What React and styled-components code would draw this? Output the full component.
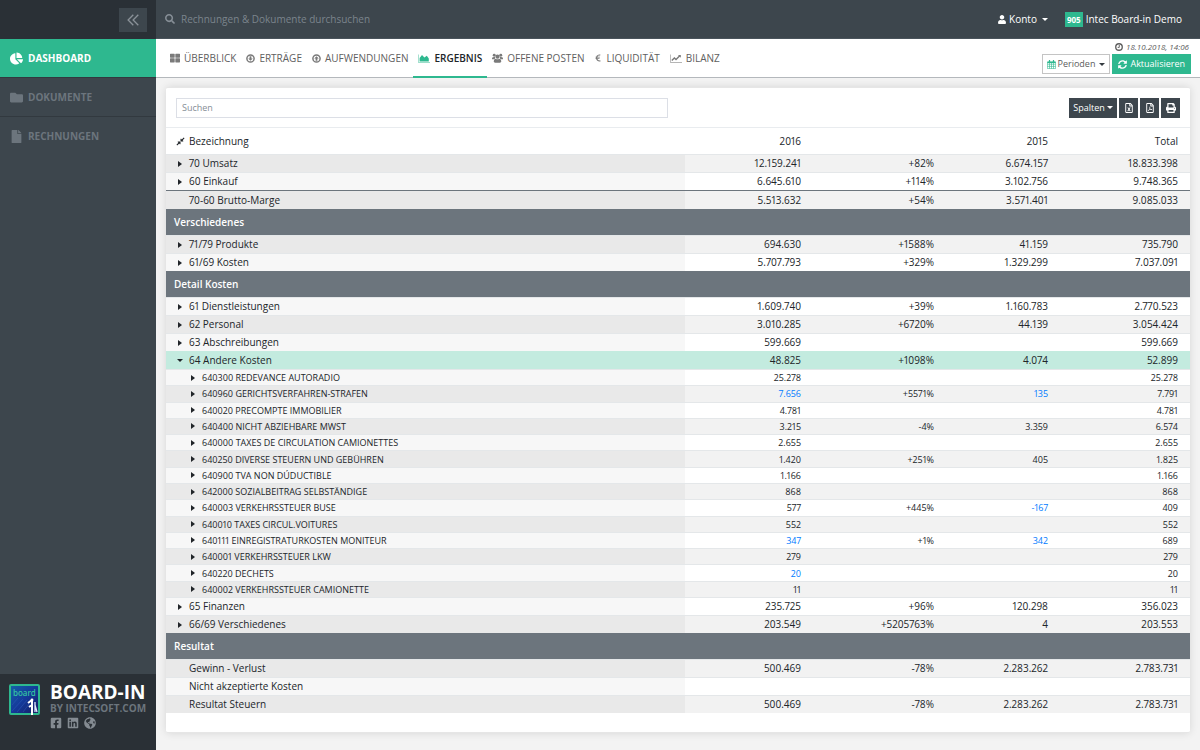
import React, { useState } from 'react';
import styled, { createGlobalStyle, css } from 'styled-components';
import {
    FaChartPie, FaCompressAlt, FaEuroSign, FaFacebookSquare, FaFile, FaFolder,
    FaGlobeAmericas, FaLinkedin, FaPrint, FaRegFileExcel, FaRegFilePdf, FaSearch,
    FaSyncAlt, FaThLarge, FaUser,
} from 'react-icons/fa';

const GREEN = '#2eb88f';
const SLATE = '#3d464d';
const DARK = '#2a3036';
const TEXT = '#212529';

const CircleArrow = ({ down }) => (
    <svg viewBox="0 0 12 12" width="9" height="9" fill="none" stroke="currentColor" strokeWidth="2">
        <circle cx="6" cy="6" r="4.8" />
        <path
            d={down ? 'M6 9 L3 6 H4.8 V3 H7.2 V6 H9 Z' : 'M6 3 L3 6 H4.8 V9 H7.2 V6 H9 Z'}
            fill="currentColor"
            stroke="none"
        />
    </svg>
);

const AreaChart = () => (
    <svg viewBox="0 0 12 9" width="12" height="9">
        <path d="M0.4 0.5 V8.5 H12" fill="none" stroke="currentColor" strokeWidth="0.8" opacity="0.6" />
        <path d="M1.6 7.4 V4 L4 1 L6.4 3.4 L8.8 1.8 L10.8 4.6 V7.4 Z" fill="currentColor" />
    </svg>
);

const LineChart = () => (
    <svg viewBox="0 0 12 9" width="12" height="9" fill="none" stroke="currentColor">
        <path d="M0.4 0.5 V8.5 H12" strokeWidth="0.8" opacity="0.7" />
        <path d="M1.8 6.6 L4.4 4 L6 5.5 L9.8 1.8" strokeWidth="1.4" />
        <path d="M8 1 H10.8 V3.8 Z" fill="currentColor" stroke="none" />
    </svg>
);

const Group = () => (
    <svg viewBox="0 0 12 11" width="11" height="10" fill="currentColor">
        <circle cx="2.4" cy="2.4" r="1.6" />
        <circle cx="9.6" cy="2.4" r="1.6" />
        <path d="M0 6.8 V5.6 Q0.4 4.2 3.4 4.5 L3 6.8 Z M12 6.8 V5.6 Q11.6 4.2 8.6 4.5 L9 6.8 Z" />
        <circle cx="6" cy="4" r="2.3" />
        <path d="M1.8 9.2 Q2 6.4 4 6.4 Q6 7.6 8 6.4 Q10 6.4 10.2 9.2 Q10.2 10.8 8.6 10.8 H3.4 Q1.8 10.8 1.8 9.2 Z" />
    </svg>
);

const Clock = () => (
    <svg viewBox="0 0 12 12" width="8" height="8" fill="none" stroke="currentColor">
        <circle cx="6" cy="6" r="4.9" strokeWidth="2" />
        <path d="M6.4 3 V6.6 H4" strokeWidth="1.4" />
    </svg>
);

const Calendar = () => (
    <svg viewBox="0 0 9 9" width="9" height="9" fill="none" stroke="currentColor">
        <path d="M0.4 2 H8.6 V8.6 H0.4 Z M0.4 4.2 H8.6 M0.4 6.4 H8.6 M2.5 3 V8.6 M4.5 3 V8.6 M6.5 3 V8.6" strokeWidth="0.6" />
        <path d="M0.4 2.3 H8.6" strokeWidth="1.4" />
        <path d="M2.5 0 V2 M6.5 0 V2" strokeWidth="1.2" />
    </svg>
);

const DoubleChevron = () => (
    <svg viewBox="0 0 12 12" width="12" height="12" fill="none" stroke="currentColor" strokeWidth="1.3">
        <path d="M6.3 0.8 L1.1 6 L6.3 11.2 M11.3 0.8 L6.1 6 L11.3 11.2" />
    </svg>
);

const LogoMark = () => (
    <svg viewBox="0 0 31 31" width="31" height="31">
        <defs>
            <linearGradient id="logoBg" x1="0" y1="0" x2="1" y2="1">
                <stop offset="0" stopColor="#1561a8" />
                <stop offset="0.5" stopColor="#14399a" />
                <stop offset="1" stopColor="#161b5c" />
            </linearGradient>
        </defs>
        <rect x="1" y="1" width="29" height="29" rx="1" fill="url(#logoBg)" stroke="#2eb88f" strokeWidth="2" />
        <path d="M3 27 L14 15 M8 28 L18 16 M3 21 L9 14 M14 28 L20 20" stroke="#2a55b5" strokeWidth="0.6" />
        <text x="4" y="12" fontFamily="Noto Sans, sans-serif" fontSize="8" fontWeight="500" fill="#35c7a0">board</text>
        <path d="M19 19 L23 16 M23 16 V31 M23 21 L20 23" stroke="#fff" strokeWidth="2" fill="none" />
        <circle cx="23" cy="16" r="1.4" fill="#fff" />
        <path d="M26 18 V28 M26 21 L28 28" stroke="#dfe8ff" strokeWidth="1.3" fill="none" />
    </svg>
);

const TABS = [
    { label: 'Überblick', icon: <FaThLarge /> },
    { label: 'Erträge', icon: <CircleArrow down /> },
    { label: 'Aufwendungen', icon: <CircleArrow /> },
    { label: 'Ergebnis', icon: <AreaChart /> },
    { label: 'Offene Posten', icon: <Group /> },
    { label: 'Liquidität', icon: <FaEuroSign size={8} /> },
    { label: 'Bilanz', icon: <LineChart /> },
];

const MENU = [
    { label: 'Dashboard', icon: <FaChartPie /> },
    { label: 'Dokumente', icon: <FaFolder /> },
    { label: 'Rechnungen', icon: <FaFile /> },
];

// [label, 2016, change, 2015, total], a leading * marks a value that can be opened
const ACCOUNTS = [
    ['640300 REDEVANCE AUTORADIO', '25.278', '', '', '25.278'],
    ['640960 GERICHTSVERFAHREN-STRAFEN', '*7.656', '+5571%', '*135', '7.791'],
    ['640020 PRECOMPTE IMMOBILIER', '4.781', '', '', '4.781'],
    ['640400 NICHT ABZIEHBARE MWST', '3.215', '-4%', '3.359', '6.574'],
    ['640000 TAXES DE CIRCULATION CAMIONETTES', '2.655', '', '', '2.655'],
    ['640250 DIVERSE STEUERN UND GEBÜHREN', '1.420', '+251%', '405', '1.825'],
    ['640900 TVA NON DÚDUCTIBLE', '1.166', '', '', '1.166'],
    ['642000 SOZIALBEITRAG SELBSTÄNDIGE', '868', '', '', '868'],
    ['640003 VERKEHRSSTEUER BUSE', '577', '+445%', '*-167', '409'],
    ['640010 TAXES CIRCUL.VOITURES', '552', '', '', '552'],
    ['640111 EINREGISTRATURKOSTEN MONITEUR', '*347', '+1%', '*342', '689'],
    ['640001 VERKEHRSSTEUER LKW', '279', '', '', '279'],
    ['640220 DECHETS', '*20', '', '', '20'],
    ['640002 VERKEHRSSTEUER CAMIONETTE', '11', '', '', '11'],
];

const SECTIONS = [
    {
        rows: [
            { cells: ['70 Umsatz', '12.159.241', '+82%', '6.674.157', '18.833.398'], caret: true, shade: true },
            { cells: ['60 Einkauf', '6.645.610', '+114%', '3.102.756', '9.748.365'], caret: true },
            { cells: ['70-60 Brutto-Marge', '5.513.632', '+54%', '3.571.401', '9.085.033'], shade: true, sum: true },
        ],
    },
    {
        title: 'Verschiedenes',
        rows: [
            { cells: ['71/79 Produkte', '694.630', '+1588%', '41.159', '735.790'], caret: true, shade: true },
            { cells: ['61/69 Kosten', '5.707.793', '+329%', '1.329.299', '7.037.091'], caret: true },
        ],
    },
    {
        title: 'Detail Kosten',
        rows: [
            { cells: ['61 Dienstleistungen', '1.609.740', '+39%', '1.160.783', '2.770.523'], caret: true },
            { cells: ['62 Personal', '3.010.285', '+6720%', '44.139', '3.054.424'], caret: true, shade: true },
            { cells: ['63 Abschreibungen', '599.669', '', '', '599.669'], caret: true },
            { cells: ['64 Andere Kosten', '48.825', '+1098%', '4.074', '52.899'], caret: true, children: ACCOUNTS },
        ],
    },
    {
        rows: [
            { cells: ['65 Finanzen', '235.725', '+96%', '120.298', '356.023'], caret: true },
            { cells: ['66/69 Verschiedenes', '203.549', '+5205763%', '4', '203.553'], caret: true, shade: true },
        ],
    },
    {
        title: 'Resultat',
        rows: [
            { cells: ['Gewinn - Verlust', '500.469', '-78%', '2.283.262', '2.783.731'], shade: true },
            { cells: ['Nicht akzeptierte Kosten', '', '', '', ''] },
            { cells: ['Resultat Steuern', '500.469', '-78%', '2.283.262', '2.783.731'], shade: true },
        ],
    },
];

const Value = ({ text }) =>
    text.startsWith('*') ? <ValueLink href="#detail">{text.slice(1)}</ValueLink> : text;

const Cells = ({ cells }) => cells.slice(1).map((cell, i) => <NumCell key={i}><Value text={cell} /></NumCell>);

const App = () => {
    const [tab, setTab] = useState('Ergebnis');
    const [open, setOpen] = useState(true);

    return (
        <>
            <GlobalStyle />
            <Shell>
                <Sidebar>
                    <SidebarTop>
                        <CollapseButton type="button" aria-label="Menü einklappen"><DoubleChevron /></CollapseButton>
                    </SidebarTop>
                    <nav>
                        {MENU.map((item, i) => (
                            <MenuLink key={item.label} href="#menu" $active={i === 0}>
                                {item.icon}
                                {item.label}
                            </MenuLink>
                        ))}
                    </nav>
                    <Brand>
                        <LogoMark />
                        <div>
                            <BrandName>BOARD-IN</BrandName>
                            <BrandBy>BY INTECSOFT.COM</BrandBy>
                            <Socials>
                                <a href="#facebook" aria-label="Facebook"><FaFacebookSquare /></a>
                                <a href="#linkedin" aria-label="LinkedIn"><FaLinkedin /></a>
                                <a href="#web" aria-label="Website"><FaGlobeAmericas /></a>
                            </Socials>
                        </div>
                    </Brand>
                </Sidebar>

                <Main>
                    <TopBar>
                        <SearchLabel>
                            <FaSearch />
                            <TopSearch type="text" aria-label="Suche" placeholder="Rechnungen & Dokumente durchsuchen" />
                        </SearchLabel>
                        <AccountButton type="button" aria-haspopup="menu">
                            <FaUser />
                            Konto
                            <Caret />
                        </AccountButton>
                        <Company>
                            <Badge>905</Badge>
                            Intec Board-in Demo
                        </Company>
                    </TopBar>

                    <TabBar>
                        <Tabs>
                            {TABS.map(({ label, icon }) => (
                                <Tab key={label} type="button" $active={tab === label} onClick={() => setTab(label)}>
                                    {icon}
                                    {label}
                                </Tab>
                            ))}
                        </Tabs>
                        <Actions>
                            <Stamp><Clock /><i>18.10.2018, 14:06</i></Stamp>
                            <ActionRow>
                                <PeriodButton type="button" aria-haspopup="menu">
                                    <Calendar />
                                    Perioden
                                    <Caret />
                                </PeriodButton>
                                <RefreshButton type="button">
                                    <FaSyncAlt />
                                    Aktualisieren
                                </RefreshButton>
                            </ActionRow>
                        </Actions>
                    </TabBar>

                    <Card>
                        <Toolbar>
                            <TableSearch type="text" aria-label="Suchen" placeholder="Suchen" />
                            <ToolButtons>
                                <ToolButton type="button" $wide>Spalten<Caret /></ToolButton>
                                <ToolButton type="button" aria-label="Excel"><FaRegFileExcel /></ToolButton>
                                <ToolButton type="button" aria-label="PDF"><FaRegFilePdf /></ToolButton>
                                <ToolButton type="button" aria-label="Drucken"><FaPrint /></ToolButton>
                            </ToolButtons>
                        </Toolbar>
                        <Table>
                            <colgroup>
                                <col />
                                <Col $width={128} />
                                <Col $width={133} />
                                <Col $width={114} />
                                <Col $width={130} />
                            </colgroup>
                            <thead>
                                <HeadRow>
                                    <th scope="col"><Label><FaCompressAlt />Bezeichnung</Label></th>
                                    <th scope="col">2016</th>
                                    <td />
                                    <th scope="col">2015</th>
                                    <th scope="col">Total</th>
                                </HeadRow>
                            </thead>
                            {SECTIONS.map((section, s) => (
                                <React.Fragment key={s}>
                                    <tbody>
                                        {section.title && (
                                            <GroupRow><th colSpan="5" scope="colgroup">{section.title}</th></GroupRow>
                                        )}
                                        {section.rows.map((row) => (
                                            <Row
                                                key={row.cells[0]}
                                                $shade={row.shade}
                                                $sum={row.sum}
                                                $selected={row.children && open}
                                            >
                                                <LabelCell>
                                                    <Label>
                                                        {row.caret && (
                                                            <Toggle
                                                                type="button"
                                                                aria-label={row.cells[0]}
                                                                aria-expanded={Boolean(row.children && open)}
                                                                onClick={() => row.children && setOpen(!open)}
                                                            >
                                                                <Caret $right={!(row.children && open)} />
                                                            </Toggle>
                                                        )}
                                                        {!row.caret && <Blank />}
                                                        {row.cells[0]}
                                                    </Label>
                                                </LabelCell>
                                                <Cells cells={row.cells} />
                                            </Row>
                                        ))}
                                    </tbody>
                                    {open && section.rows.some((row) => row.children) && (
                                        <AccountBody>
                                            {ACCOUNTS.map((cells, i) => (
                                                <Row key={cells[0]} $shade={i % 2 === 1}>
                                                    <LabelCell>
                                                        <Label $nested>
                                                            <Toggle type="button" aria-label={cells[0]}><Caret $right /></Toggle>
                                                            {cells[0]}
                                                        </Label>
                                                    </LabelCell>
                                                    <Cells cells={cells} />
                                                </Row>
                                            ))}
                                        </AccountBody>
                                    )}
                                </React.Fragment>
                            ))}
                        </Table>
                    </Card>
                </Main>
            </Shell>
        </>
    );
};

const GlobalStyle = createGlobalStyle`
  * {
    box-sizing: border-box;
  }

  body {
    margin: 0;
    background: #f3f3f3;
    color: ${TEXT};
    font-family: 'Open Sans', 'Noto Sans', sans-serif;
    font-size: 10px;
    line-height: 14px;
  }

  button,
  input {
    font: inherit;
    border-radius: 0;
  }

  button {
    cursor: pointer;
  }

  a {
    text-decoration: none;
  }

  svg {
    flex: none;
  }
`;

const Shell = styled.div`
  display: flex;
  min-height: 100vh;
`;

const Sidebar = styled.aside`
  display: flex;
  flex: none;
  flex-direction: column;
  width: 156px;
  background: ${SLATE};

  nav {
    flex: 1;
  }
`;

const SidebarTop = styled.div`
  display: flex;
  align-items: center;
  justify-content: flex-end;
  height: 39px;
  padding-right: 9px;
  background: ${DARK};
`;

const CollapseButton = styled.button`
  display: flex;
  align-items: center;
  justify-content: center;
  width: 28px;
  height: 24px;
  padding: 0;
  border: 0;
  background: ${SLATE};
  color: #8b9299;
`;

const MenuLink = styled.a`
  display: flex;
  align-items: center;
  gap: 5px;
  height: 39px;
  padding: 0 10px;
  border-bottom: 1px solid #32393f;
  color: #6c757d;
  font-weight: 700;
  text-transform: uppercase;

  &:last-child {
    border-bottom-color: transparent;
  }

  svg {
    width: 13px;
    height: 13px;
  }

  ${(p) => p.$active && css`
    background: ${GREEN};
    color: #fff;
  `}
`;

const Brand = styled.div`
  display: flex;
  gap: 10px;
  height: 76px;
  padding: 10px 9px;
  background: ${DARK};
`;

const BrandName = styled.div`
  color: #fff;
  font-size: 19px;
  font-weight: 700;
  line-height: 17px;
`;

const BrandBy = styled.div`
  color: #6c757d;
  font-weight: 700;
  line-height: 14px;
  white-space: nowrap;
`;

const Socials = styled.div`
  display: flex;
  gap: 5px;
  margin-top: 2px;

  a {
    display: flex;
    color: #848b92;
    font-size: 12px;
  }
`;

const Main = styled.main`
  flex: 1;
  min-width: 0;
`;

const TopBar = styled.header`
  display: flex;
  align-items: center;
  height: 39px;
  padding: 0 18px 0 9px;
  border-bottom: 1px solid #4a545c;
  background: ${SLATE};
  color: #fff;
`;

const SearchLabel = styled.label`
  display: flex;
  flex: 1;
  align-items: center;
  gap: 6px;
  color: #868e96;

  svg {
    width: 10px;
    height: 10px;
  }
`;

const TopSearch = styled.input`
  flex: 1;
  padding: 0;
  border: 0;
  outline: none;
  background: none;
  color: #fff;

  &::placeholder {
    color: #7b848c;
    opacity: 1;
  }
`;

const Caret = styled.span`
  display: inline-block;
  flex: none;
  border: 3px solid transparent;
  border-top-color: currentColor;
  border-bottom: 0;

  ${(p) => p.$right && css`
    border: 3px solid transparent;
    border-left: 4px solid currentColor;
    border-right: 0;
  `}
`;

const AccountButton = styled.button`
  display: flex;
  align-items: center;
  gap: 3px;
  padding: 0;
  border: 0;
  background: none;
  color: #fff;

  svg {
    width: 8px;
    height: 9px;
  }

  ${Caret} {
    margin-left: 2px;
  }
`;

const Company = styled.div`
  display: flex;
  align-items: center;
  gap: 3px;
  margin-left: 17px;
`;

const Badge = styled.span`
  padding: 0 2px;
  background: ${GREEN};
  font-size: 8px;
  font-weight: 700;
  line-height: 15px;
`;

const TabBar = styled.div`
  display: flex;
  justify-content: space-between;
  height: 39px;
  padding: 0 9px;
  border-bottom: 1px solid #b4b8bc;
  background: #fff;
`;

const Tabs = styled.nav`
  display: flex;
`;

const Tab = styled.button`
  display: flex;
  align-items: center;
  gap: 4px;
  height: 39px;
  padding: 1px 5px 0;
  border: 0;
  border-bottom: 2px solid transparent;
  background: none;
  color: #606060;
  font-weight: 500;
  text-transform: uppercase;

  svg {
    color: #7a7a7a;
  }

  ${(p) => p.$active && css`
    border-bottom-color: ${GREEN};
    color: #212529;
    font-weight: 600;

    svg {
      color: ${GREEN};
    }
  `}
`;

const Actions = styled.div`
  display: flex;
  flex-direction: column;
  align-items: flex-end;
`;

const Stamp = styled.div`
  display: flex;
  align-items: center;
  gap: 3px;
  padding-right: 2px;
  color: #5c5c5c;
  font-size: 8px;
  line-height: 15px;
`;

const ActionRow = styled.div`
  display: flex;
  gap: 2px;
`;

const ActionButton = styled.button`
  display: flex;
  align-items: center;
  gap: 2px;
  height: 20px;
  padding: 0 4px;
  border: 1px solid #c4c4c4;
  font-size: 9px;
`;

const PeriodButton = styled(ActionButton)`
  background: #fff;
  color: #5c5c5c;

  svg {
    color: ${GREEN};
  }

  ${Caret} {
    margin-left: 2px;
    color: #343a40;
  }
`;

const RefreshButton = styled(ActionButton)`
  gap: 3px;
  padding: 0 5px;
  border-color: ${GREEN};
  background: ${GREEN};
  color: #fff;
`;

const Card = styled.section`
  margin: 9px 10px 10px;
  padding-bottom: 19px;
  border: 1px solid #e6e6e6;
  border-width: 1px 0;
  border-radius: 2px;
  background: #fff;
  box-shadow: 0 0 8px rgba(0, 0, 0, 0.12);
`;

const Toolbar = styled.div`
  display: flex;
  align-items: center;
  justify-content: space-between;
  height: 39px;
  padding: 0 10px;
`;

const TableSearch = styled.input`
  width: 49%;
  height: 20px;
  padding: 0 5px;
  border: 1px solid #dcdfe6;
  font-size: 9px;

  &::placeholder {
    color: #868e96;
    opacity: 1;
  }
`;

const ToolButtons = styled.div`
  display: flex;
  gap: 2px;
`;

const ToolButton = styled.button`
  display: flex;
  align-items: center;
  justify-content: center;
  gap: 2px;
  width: ${(p) => (p.$wide ? 48 : 19)}px;
  height: 20px;
  padding: 0;
  border: 0;
  background: ${SLATE};
  color: #fff;
  font-size: 9px;

  svg {
    width: 10px;
    height: 10px;
  }
`;

const Table = styled.table`
  width: 100%;
  table-layout: fixed;
  border-collapse: separate;
  border-spacing: 0;
  font-weight: 500;
  font-variant-numeric: proportional-nums;

  th,
  td {
    padding: 0 12px 0 0;
    text-align: right;
    white-space: nowrap;
  }
`;

const Col = styled.col`
  width: ${(p) => p.$width}px;
`;

const Label = styled.span`
  display: flex;
  align-items: center;
  padding-left: ${(p) => (p.$nested ? 23 : 10)}px;

  svg {
    width: 9px;
    height: 9px;
    margin-right: 4px;
  }
`;

const HeadRow = styled.tr`
  height: 27px;

  th,
  td {
    border-top: 1px solid #e9ecef;
    font-weight: 500;
  }
`;

const GroupRow = styled.tr`
  height: 26px;

  && th {
    padding-left: 8px;
    background: #6c757d;
    color: #fff;
    font-weight: 600;
    text-align: left;
  }
`;

const LabelCell = styled.td``;

const NumCell = styled.td``;

const Row = styled.tr`
  height: ${(p) => (p.$sum ? 19 : 18)}px;
  background: ${(p) => (p.$shade ? '#f2f2f2' : '#fff')};

  td {
    border-top: 1px solid #e4e7e9;
    line-height: 15px;
  }

  ${LabelCell} {
    background: ${(p) => (p.$shade ? '#e9e9e9' : '#f7f7f7')};
  }

  ${(p) => p.$sum && css`
    td {
      border-top-color: #6c757d;
    }
  `}

  ${(p) => p.$selected && css`
    &,
    ${LabelCell} {
      background: #c3ebdf;
    }

    td {
      border-top-color: #c3ebdf;
    }
  `}
`;

const AccountBody = styled.tbody`
  height: 228px;
  font-size: 9px;

  ${Row} {
    height: 16px;
  }
`;

const Toggle = styled.button`
  display: flex;
  align-items: center;
  justify-content: center;
  width: 8px;
  height: 8px;
  margin-right: 5px;
  padding: 0;
  border: 0;
  background: none;
  color: #212529;
`;

const Blank = styled.span`
  width: 13px;
`;

const ValueLink = styled.a`
  color: #007bff;
`;

export default App;
